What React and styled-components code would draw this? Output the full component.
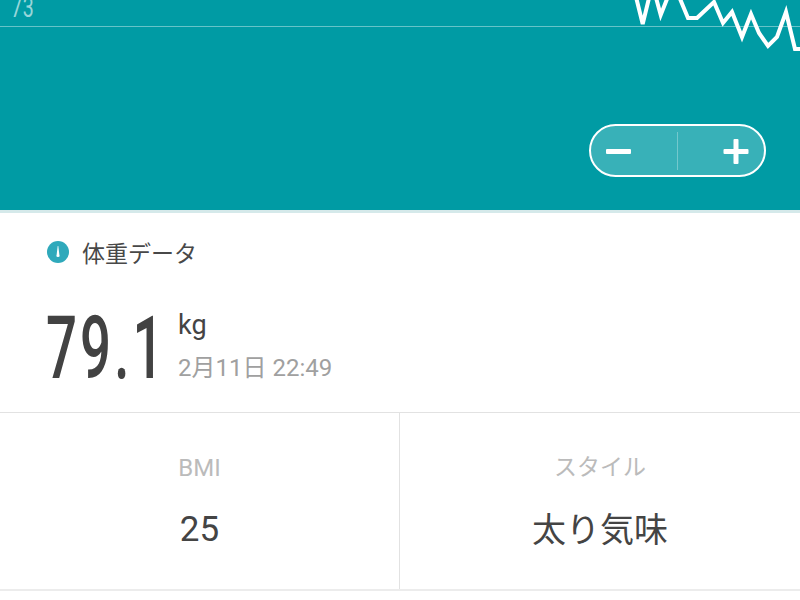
import React from "react";
import styled, { createGlobalStyle } from "styled-components";

const GlobalStyle = createGlobalStyle`
    html, body {
        margin: 0;
        padding: 0;
        background: #ffffff;
    }
    body {
        width: 800px;
        height: 600px;
        overflow: hidden;
        font-family: Roboto, "Noto Sans CJK JP", sans-serif;
    }
`;

// ===== CHART HEADER =====
const Hero = styled.div`
    position: relative;
    background: #009ba4;
    border-bottom: 3px solid #d5e9ea;
    display: flex;
    justify-content: flex-end;
    align-items: flex-start;
    padding: 124px 34px 0 0;
    height: 86px;
`;

const GridLine = styled.div`
    position: absolute;
    left: 0;
    right: 0;
    top: 26px;
    height: 1px;
    background: rgba(255, 255, 255, 0.4);
`;

const AxisLabel = styled.div`
    position: absolute;
    left: 11px;
    top: -6px;
    font-size: 28px;
    line-height: 28px;
    letter-spacing: 1px;
    color: rgba(255, 255, 255, 0.6);
    transform: scaleX(0.7);
    transform-origin: left top;
`;

const ChartLine = styled.svg`
    position: absolute;
    left: 0;
    top: 0;
`;

const ZoomPill = styled.div`
    width: 177px;
    height: 53px;
    box-sizing: border-box;
    border: 2px solid #ffffff;
    border-radius: 27px;
    background: rgba(255, 255, 255, 0.22);
    display: flex;
    align-items: center;
`;

const ZoomButton = styled.div`
    flex: 1;
    height: 100%;
    display: flex;
    align-items: center;
    justify-content: ${props => (props.$right ? "flex-end" : "flex-start")};
    padding: 0 15px;
    box-sizing: border-box;
`;

const ZoomDivider = styled.div`
    width: 1px;
    height: 38px;
    background: rgba(255, 255, 255, 0.3);
`;

// ===== WEIGHT BLOCK =====
const WeightBlock = styled.div`
    padding: 0 47px;
    height: 199px;
    box-sizing: border-box;
`;

const TitleRow = styled.div`
    display: flex;
    align-items: center;
    gap: 13px;
    height: 78px;
`;

const TitleText = styled.div`
    font-size: 23px;
    color: #484848;
`;

const ReadingRow = styled.div`
    display: flex;
    align-items: flex-start;
    margin-top: 9px;
`;

const BigNumber = styled.div`
    width: 131px;
    font-size: 88px;
    line-height: 88px;
    font-weight: 500;
    letter-spacing: 5px;
    color: #424242;
    margin-top: 4px;
    margin-left: -1px;
    margin-right: 1px;
    transform: scaleX(0.62);
    transform-origin: left top;
    white-space: nowrap;
`;

const ReadingMeta = styled.div`
    display: flex;
    flex-direction: column;
    margin-top: 10px;
`;

const Unit = styled.div`
    font-size: 27px;
    line-height: 30px;
    color: #444444;
`;

const DateText = styled.div`
    margin-top: 14px;
    font-size: 24px;
    line-height: 28px;
    color: #a0a0a0;
`;

// ===== STATS =====
const StatsGrid = styled.div`
    display: grid;
    grid-template-columns: 400px 400px;
    height: 179px;
    box-sizing: border-box;
    border-top: 1px solid #e2e2e2;
    border-bottom: 2px solid #ececec;
`;

const StatCell = styled.div`
    display: flex;
    flex-direction: column;
    align-items: center;
    border-right: ${props => (props.$divider ? "1px solid #e2e2e2" : "none")};
    padding-top: 40px;
`;

const StatLabel = styled.div`
    font-size: ${props => props.$size}px;
    line-height: 30px;
    color: #bbbbbb;
`;

const StatValue = styled.div`
    margin-top: 24px;
    font-size: ${props => props.$size}px;
    line-height: 46px;
    color: #444444;
`;

// ===== ICONS =====
function GaugeIcon() {
    return (
        <svg width="22" height="22" viewBox="0 0 22 22">
            <circle cx="11" cy="11" r="11" fill="#2fa9bb" />
            <path d="M10.7 5h.6l1.1 9a1.5 1.5 0 1 1-2.8 0z" fill="#ffffff" />
        </svg>
    );
}

function Minus() {
    return (
        <svg width="26" height="26" viewBox="0 0 26 26">
            <rect x="0" y="11" width="25" height="5" rx="1" fill="#ffffff" />
        </svg>
    );
}

function Plus() {
    return (
        <svg width="26" height="26" viewBox="0 0 26 26">
            <rect x="0.5" y="11" width="25" height="5" rx="1" fill="#ffffff" />
            <rect x="10.5" y="1" width="5" height="25" rx="1" fill="#ffffff" />
        </svg>
    );
}

const points = "636,-3 642.7,24 650,-6 655,-6 660.7,15 669,-6 678,-6 688,18 697,18 714,2 723,23 732,12 742,37 751,14 759,33 768,46 777,37 786,12 795,49 802,49";

// ===== MAIN COMPONENT =====
export default function App() {
    return (
        <>
            <GlobalStyle />
            <Hero>
                <GridLine />
                <AxisLabel>73</AxisLabel>
                <ChartLine width="800" height="60" viewBox="0 0 800 60">
                    <polyline points={points} fill="none" stroke="#ffffff" strokeWidth="4" strokeLinejoin="miter" />
                </ChartLine>
                <ZoomPill>
                    <ZoomButton><Minus /></ZoomButton>
                    <ZoomDivider />
                    <ZoomButton $right><Plus /></ZoomButton>
                </ZoomPill>
            </Hero>
            <WeightBlock>
                <TitleRow>
                    <GaugeIcon />
                    <TitleText>体重データ</TitleText>
                </TitleRow>
                <ReadingRow>
                    <BigNumber>79.1</BigNumber>
                    <ReadingMeta>
                        <Unit>kg</Unit>
                        <DateText>2月11日 22:49</DateText>
                    </ReadingMeta>
                </ReadingRow>
            </WeightBlock>
            <StatsGrid>
                <StatCell $divider>
                    <StatLabel $size={24}>BMI</StatLabel>
                    <StatValue $size={35}>25</StatValue>
                </StatCell>
                <StatCell>
                    <StatLabel $size={23}>スタイル</StatLabel>
                    <StatValue $size={34}>太り気味</StatValue>
                </StatCell>
            </StatsGrid>
        </>
    );
}
